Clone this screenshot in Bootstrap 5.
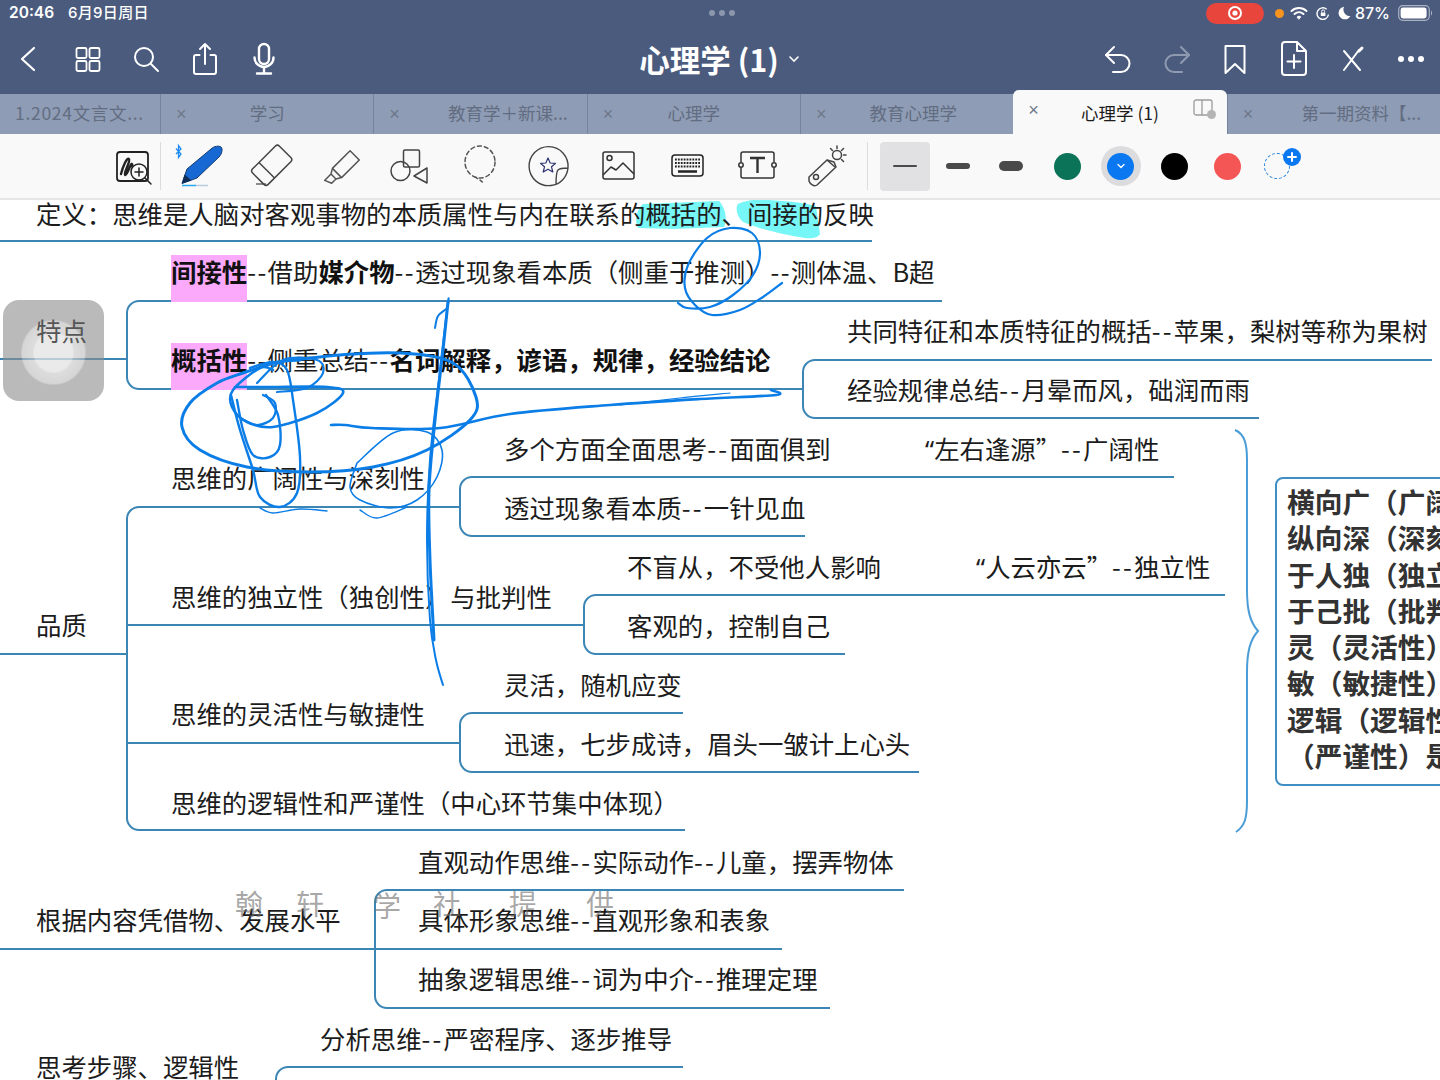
<!DOCTYPE html>
<html lang="zh-CN">
<head>
    <meta charset="UTF-8">
    <meta name="viewport" content="width=device-width, initial-scale=1.0">
    <title>心理学 (1)</title>
    <link href="https://cdn.jsdelivr.net/npm/bootstrap@5.3.0/dist/css/bootstrap.min.css" rel="stylesheet">
    <style>
        body { background: #fff; font-family: "Noto Sans CJK SC", "Noto Sans", sans-serif; overflow: hidden; }
        .app { width: 1440px; height: 1080px; overflow: hidden; }
        svg { display: block; overflow: visible; }

        /* top bars */
        .top-bars { background: #4b5b7e; color: #fff; }
        .status-bar { height: 26px; padding: 0 6px 0 9px; font-family: Inter, "Noto Sans CJK SC", sans-serif; font-size: 15.500px; font-weight: 600; }
        .status-date { margin-left: 14px; font-size: 15px; font-weight: 500; letter-spacing: .3px; }
        .status-side { flex: 1 1 0; }
        .grip-dot { width: 6px; height: 6px; border-radius: 50%; background: #8c97ad; }
        .rec-pill { width: 58px; height: 21px; border-radius: 11px; background: #e8453c; }
        .cam-dot { width: 9px; height: 9px; border-radius: 50%; background: #f7931e; margin: 0 6px 0 11px; }
        .batt-pct { margin: 0 8px 0 0; font-size: 16px; font-weight: 500; }
        .app-bar { height: 68px; padding-bottom: 2px; }
        .bar-side { flex: 1 1 0; }
        .bar-left { padding-left: 13px; gap: 29px; }
        .bar-right { padding-right: 14px; gap: 28.600px; }
        .bar-icon { width: 30px; height: 36px; }
        .doc-title { font-size: 30.500px; font-weight: 700; line-height: 36px; }
        .doc-chev { margin-left: 9px; }

        /* tabs */
        .tab-row { height: 40px; background: #8f9cb5; }
        .doc-tab { position: relative; width: 213.400px; height: 40px; padding-bottom: 2px; border-left: 1px solid #76839d; color: #626d82; font-size: 17.500px; }
        .doc-tab.first { width: 160px; border-left: 0; padding-left: 15px; letter-spacing: .7px; }
        .doc-tab .tab-x { position: absolute; left: 15px; top: 8px; font-size: 18px; font-family: "Liberation Sans", sans-serif; line-height: 24px; color: #6c7789; }
        .doc-tab .tab-name { flex: 1; text-align: center; padding-left: 14px; padding-right: 14px; white-space: nowrap; }
        .doc-tab .tab-name.nudge { padding-left: 26px; }
        .doc-tab .tab-name.long { text-align: right; padding-right: 19px; }
        .doc-tab.on { background: #f9f9f9; color: #1c1c1c; border: 0; height: 44px; margin-top: -4px; padding-top: 4px; border-radius: 6px 6px 0 0; }
        .tab-split { position: absolute; left: 180px; top: 9px; }

        /* tool bar */
        .tool-bar { height: 66px; background: #f9f9f9; border-bottom: 2px solid #e6e6e6; padding-left: 110px; }
        .tool-slot { width: 44px; height: 44px; flex: none; margin-right: 25.500px; }
        .tool-slot.zoom-slot { margin-right: 6px; }
        .tool-sep { width: 1px; height: 48px; background: #dcdcdc; flex: none; }
        .sep-a { margin-right: 18.500px; }
        .sep-b { margin-left: -7.500px; margin-right: 12px; }
        .stroke-slot { width: 50px; height: 49px; flex: none; margin-right: 3px; border-radius: 4px; }
        .stroke-slot.on { background: #e1e1e4; }
        .stroke-slot.last { margin-right: 5px; }
        .stroke-dash { width: 24px; background: #4a4a4a; border-radius: 5px; }
        .w1 { height: 2px; } .w2 { height: 6px; } .w3 { height: 10px; }
        .ink-slot { width: 53.300px; height: 49px; flex: none; }
        .ink-dot { width: 27px; height: 27px; border-radius: 50%; }
        .ink-on { width: 40px; height: 40px; border-radius: 50%; background: #dcdcde; }
        .c-green { background: #0b7358; } .c-blue { background: #0a78f0; } .c-black { background: #000; } .c-red { background: #f45656; }
        .ink-add { position: relative; width: 26px; height: 26px; border: 1.500px dashed #1b7fe0; border-radius: 50%; margin-left: 10px; }
        .ink-plus { position: absolute; left: 17.500px; top: -6.500px; width: 18px; height: 18px; border-radius: 50%; background: #0a78f0; }

        /* mind map sheet */
        .sheet { position: relative; width: 1440px; height: 880px; overflow: hidden; background: #fff; }
        .sheet-layer { position: absolute; left: 0; top: 0; }
        .mm-node { position: absolute; margin-top: -2px; white-space: nowrap; font-size: 25.400px; line-height: 26px; color: #1c1c1c; }
        .mm-node b { font-weight: 700; color: #111; }
        .mm-node.over-btn { z-index: 2; color: #565656; }
        .pink { background: linear-gradient(#fba9fb, #fba9fb) no-repeat 0 2px; padding-bottom: 13px; }
        .dd { letter-spacing: 2.200px; }
        .dd.tight { letter-spacing: 1.400px; }
        .open-q { font-family: "Noto Sans", sans-serif; }
        .stamp { position: absolute; font-size: 28px; line-height: 32px; color: rgba(110,110,110,.6); }
        .sum-box { position: absolute; left: 1275px; top: 277px; width: 220px; height: 309px; padding: 4px 0 0 10px; border: 2px solid #3f8fc4; border-radius: 8px; font-size: 27.700px; font-weight: 700; line-height: 36.250px; color: #333; white-space: nowrap; }
        .touch-btn { position: absolute; left: 3px; top: 100px; width: 101px; height: 101px; border-radius: 16px; background: radial-gradient(circle at 50% 52%, rgba(226,226,226,.74) 0, rgba(226,226,226,.74) 19px, rgba(204,204,204,.68) 21px, rgba(190,190,190,.64) 31px, rgba(140,140,140,.6) 33px); }
    </style>
</head>
<body>
<div class="app d-flex flex-column">

    <div class="top-bars">
        <!-- status bar -->
        <div class="status-bar d-flex align-items-center">
            <div class="status-side d-flex align-items-center"><span>20:46</span><span class="status-date">6月9日周日</span></div>
            <div class="d-flex gap-1"><i class="grip-dot"></i><i class="grip-dot"></i><i class="grip-dot"></i></div>
            <div class="status-side d-flex align-items-center justify-content-end">
                <div class="rec-pill d-flex align-items-center justify-content-center">
                    <svg width="16" height="16" viewBox="0 0 16 16"><circle cx="8" cy="8" r="6" fill="none" stroke="#fff" stroke-width="2"/><circle cx="8" cy="8" r="2.600" fill="#fff"/></svg>
                </div>
                <i class="cam-dot"></i>
                <svg class="me-1" width="18" height="14" viewBox="0 0 18 14" fill="none" stroke="#fff" stroke-width="2" stroke-linecap="round"><path d="M1.500 5a11 11 0 0 1 15 0M4.500 8a6.800 6.800 0 0 1 9 0"/><path d="M7.300 10.800a2.600 2.600 0 0 1 3.400 0L9 13z" fill="#fff" stroke-width="1"/></svg>
                <svg class="ms-1 me-1" width="14" height="15" viewBox="0 0 14 15" fill="none" stroke="#fff" stroke-width="1.400"><path d="M12.500 8.500a5.800 5.800 0 1 1-1.800-5.200"/><rect x="4.800" y="6.500" width="4.600" height="3.600" rx=".6" fill="#fff" stroke="none"/><path d="M5.600 6.500V5.400a1.500 1.500 0 0 1 3 0v1.100" stroke-width="1"/></svg>
                <svg class="ms-1 me-1" width="13" height="14" viewBox="0 0 13 14"><path d="M6 .8a6.300 6.300 0 1 0 6.400 9.300A6.600 6.600 0 0 1 6 .8z" fill="#fff"/></svg>
                <span class="batt-pct">87%</span>
                <svg width="36" height="18" viewBox="0 0 36 18"><rect x=".7" y="1.700" width="30.600" height="14.600" rx="4" fill="none" stroke="#aab2c2" stroke-width="1.200"/><rect x="2.600" y="3.600" width="26" height="10.800" rx="2.400" fill="#fff"/><path d="M33 6.500c1.400.5 1.400 4.500 0 5z" fill="#aab2c2"/></svg>
            </div>
        </div>

        <!-- document bar -->
        <div class="app-bar d-flex align-items-center">
            <div class="bar-side bar-left d-flex align-items-center">
                <svg class="bar-icon" viewBox="0 0 30 36" fill="none" stroke="#fff" stroke-width="2.200" stroke-linecap="round" stroke-linejoin="round"><path d="M21 7L9 18l12 11"/></svg>
                <svg class="bar-icon" viewBox="0 0 30 36" fill="none" stroke="#fff" stroke-width="1.800"><rect x="4.500" y="7" width="10" height="10" rx="1.500"/><rect x="17.500" y="7" width="10" height="10" rx="1.500"/><rect x="4.500" y="20" width="10" height="10" rx="1.500"/><rect x="17.500" y="20" width="10" height="10" rx="1.500"/></svg>
                <svg class="bar-icon" viewBox="0 0 30 36" fill="none" stroke="#fff" stroke-width="2" stroke-linecap="round"><circle cx="13" cy="16" r="9"/><path d="M20 23l7 7"/></svg>
                <svg class="bar-icon" viewBox="0 0 30 36" fill="none" stroke="#fff" stroke-width="2" stroke-linecap="round" stroke-linejoin="round"><path d="M9.500 14H6a2 2 0 0 0-2 2v15a2 2 0 0 0 2 2h18a2 2 0 0 0 2-2V16a2 2 0 0 0-2-2h-3.500M15 23V3M10 8l5-5 5 5"/></svg>
                <svg class="bar-icon" viewBox="0 0 30 36" fill="none" stroke="#fff" stroke-width="2.400" stroke-linecap="round"><rect x="10" y="3" width="10" height="20" rx="5"/><path d="M5.500 16.500a9.500 9.500 0 0 0 19 0M15 26v6M8 32.500h14"/></svg>
            </div>
            <div class="d-flex align-items-center">
                <span class="doc-title">心理学 (1)</span>
                <svg class="doc-chev" width="12" height="8" viewBox="0 0 12 8" fill="none" stroke="#fff" stroke-width="1.600" stroke-linecap="round"><path d="M2 2l4 4 4-4"/></svg>
            </div>
            <div class="bar-side bar-right d-flex align-items-center justify-content-end">
                <svg class="bar-icon" viewBox="0 0 30 36" fill="none" stroke="#fff" stroke-width="2" stroke-linecap="round" stroke-linejoin="round"><path d="M11 6L3 14l8 8"/><path d="M3 14h15a8.500 8.500 0 0 1 0 17h-8"/></svg>
                <svg class="bar-icon" viewBox="0 0 30 36" fill="none" stroke="#8f9ab0" stroke-width="2" stroke-linecap="round" stroke-linejoin="round"><path d="M19 6l8 8-8 8"/><path d="M27 14H12a8.500 8.500 0 0 0 0 17h8"/></svg>
                <svg class="bar-icon" viewBox="0 0 30 36" fill="none" stroke="#fff" stroke-width="2" stroke-linejoin="round"><path d="M5.500 5h19v27L15 23l-9.500 9z"/></svg>
                <svg class="bar-icon" viewBox="0 0 30 36" fill="none" stroke="#fff" stroke-width="2" stroke-linecap="round" stroke-linejoin="round"><path d="M18 1H6a3 3 0 0 0-3 3v27a3 3 0 0 0 3 3h18a3 3 0 0 0 3-3V10zM18 1v9h9M15 14v13M8.500 20.500h13"/></svg>
                <svg class="bar-icon" viewBox="0 0 30 36" fill="none" stroke="#fff" stroke-width="2" stroke-linecap="round"><path d="M7 10l16 19M22 9L7 29"/><path d="M22 10l3-3" stroke-width="3"/></svg>
                <svg class="bar-icon" viewBox="0 0 30 36" fill="#fff"><circle cx="5" cy="18" r="3"/><circle cx="15" cy="18" r="3"/><circle cx="25" cy="18" r="3"/></svg>
            </div>
        </div>

        <!-- tabs -->
        <div class="tab-row d-flex">
            <div class="doc-tab first d-flex align-items-center"><span>1.2024文言文...</span></div>
            <div class="doc-tab d-flex align-items-center"><span class="tab-x">×</span><span class="tab-name">学习</span></div>
            <div class="doc-tab d-flex align-items-center"><span class="tab-x">×</span><span class="tab-name long">教育学＋新课...</span></div>
            <div class="doc-tab d-flex align-items-center"><span class="tab-x">×</span><span class="tab-name">心理学</span></div>
            <div class="doc-tab d-flex align-items-center"><span class="tab-x">×</span><span class="tab-name nudge">教育心理学</span></div>
            <div class="doc-tab on d-flex align-items-center"><span class="tab-x">×</span><span class="tab-name">心理学 (1)</span>
                <svg class="tab-split" width="24" height="22" viewBox="0 0 24 22" fill="none" stroke="#9c9c9c" stroke-width="1.300"><rect x="1" y="1" width="18" height="15" rx="2"/><path d="M9 1v15"/><circle cx="18.500" cy="15.500" r="4.500" fill="#b4b4b4" stroke="none"/></svg>
            </div>
            <div class="doc-tab d-flex align-items-center"><span class="tab-x">×</span><span class="tab-name long">第一期资料【...</span></div>
        </div>
    </div>

    <!-- drawing tools -->
    <div class="tool-bar d-flex align-items-center">
        <svg class="tool-slot zoom-slot" viewBox="0 0 44 44" fill="none" stroke="#222" stroke-width="1.500" stroke-linecap="round">
            <rect x="7" y="8" width="31" height="29" rx="3" stroke-width="1.800"/>
            <path d="M11 30c2-8 6-17 8-15s-6 15-4 16 6-13 7-11 0 9 3 5" stroke-width="2.400"/>
            <circle cx="29" cy="28" r="8" fill="#f9f9f9"/><path d="M29 24v8M25 28h8M35 34l6 6"/>
        </svg>
        <div class="tool-sep sep-a"></div>
        <svg class="tool-slot" viewBox="0 0 44 44">
            <path d="M-4 4.500L1 10l-2.500 3.500v-12L1 5l-5 5" fill="none" stroke="#1f8bf0" stroke-width="1.300"/>
            <path d="M2 39.500L7 25 31 5c3-3 8-3.500 10-2s1 7-2 10L17 34z" fill="#1768d2" stroke="#123a70" stroke-width="1"/>
            <path d="M2 39.500l2.500-9 7 6z" fill="#0f2d57"/>
            <path d="M2 41.500h14" stroke="#2aa7ef" stroke-width="1.500"/><path d="M16 41.500h12" stroke="#bbccdd" stroke-width="1.500"/>
        </svg>
        <svg class="tool-slot" viewBox="0 0 44 44" fill="none" stroke="#444" stroke-width="1.500" stroke-linejoin="round">
            <g transform="rotate(45 22 22)"><rect x="11" y="2" width="22" height="38" rx="3"/><path d="M11 28h22"/></g><path d="M7 40h10" stroke-width="1.200"/>
        </svg>
        <svg class="tool-slot" viewBox="0 0 44 44" fill="none" stroke="#555" stroke-width="1.500" stroke-linejoin="round">
            <g transform="translate(-4 7) rotate(45 22 22)"><path d="M15.500-3h13v25l-3 5h-7l-3-5zM15.500 22h13M18.500 27v9l7-3v-6"/></g>
        </svg>
        <svg class="tool-slot" viewBox="0 0 44 44" fill="none" stroke="#444" stroke-width="1.500" stroke-linejoin="round">
            <rect x="15.500" y="6" width="16" height="17" rx="1.500"/><circle cx="12.500" cy="27" r="9.500"/><path d="M39 24l-13 8 13 7z"/>
        </svg>
        <svg class="tool-slot" viewBox="0 0 44 44" fill="none" stroke="#555" stroke-width="1.500" stroke-linecap="round">
            <ellipse cx="22" cy="18" rx="15" ry="16" stroke-dasharray="4 3"/><path d="M17 33c3 2 6 3 9 7" stroke-dasharray="3 3"/>
        </svg>
        <svg class="tool-slot" viewBox="0 0 44 44" fill="none" stroke="#444" stroke-width="1.400" stroke-linejoin="round">
            <path d="M41 24A19.500 19.500 0 1 0 24 41.500c9-1 16-8 17-17.500zM41 24c-3 0-8 0-10 2s-2 7-2 15"/>
            <path d="M21 14l2.200 5 5.300.4-4 3.400 1.300 5.200-4.800-2.800-4.800 2.800 1.300-5.200-4-3.400 5.300-.4z" stroke="#2b3270" stroke-width="1.200"/>
        </svg>
        <svg class="tool-slot" viewBox="0 0 44 44" fill="none" stroke="#333" stroke-width="1.500" stroke-linejoin="round">
            <rect x="6" y="8" width="31" height="27" rx="2"/><circle cx="12.500" cy="14" r="2.500"/><path d="M6 31l8-8 5 3 7-7 11 11"/>
        </svg>
        <svg class="tool-slot" viewBox="0 0 44 44" fill="none" stroke="#222">
            <rect x="6" y="11" width="31" height="21" rx="3" stroke-width="1.500"/>
            <path d="M9 15.500h25M9 19h25M9 22.500h25" stroke-width="2" stroke-dasharray="1.800 1.100"/><path d="M12 27.500h19" stroke-width="2.500"/>
        </svg>
        <svg class="tool-slot" viewBox="0 0 44 44" fill="none" stroke="#333" stroke-width="1.500">
            <path d="M5 18V10a2 2 0 0 1 2-2h29a2 2 0 0 1 2 2v8M5 24v8a2 2 0 0 0 2 2h29a2 2 0 0 0 2-2v-8"/>
            <circle cx="5" cy="21" r="2.200"/><circle cx="38" cy="21" r="2.200"/>
            <path d="M14 14h15M21.500 14v15" stroke-width="2.400"/>
        </svg>
        <svg class="tool-slot" viewBox="0 0 44 44" fill="none" stroke="#444" stroke-width="1.500" stroke-linejoin="round">
            <path d="M4 33L22 16l7 2 2 5-19 18c-3 2-7-1-8-4z"/><circle cx="11" cy="33" r="2.500"/><path d="M22 16l8 7"/>
            <circle cx="32" cy="11" r="4.500"/><path d="M32 2v2.500M41 11h-2.500M38.500 4.500l-2 2M25.500 4.500l2 2M38.500 17.500l-2-2" stroke-linecap="round"/>
        </svg>
        <div class="tool-sep sep-b"></div>
        <div class="stroke-slot on d-flex align-items-center justify-content-center"><div class="stroke-dash w1"></div></div>
        <div class="stroke-slot d-flex align-items-center justify-content-center"><div class="stroke-dash w2"></div></div>
        <div class="stroke-slot last d-flex align-items-center justify-content-center"><div class="stroke-dash w3"></div></div>
        <div class="ink-slot d-flex align-items-center justify-content-center"><div class="ink-dot c-green"></div></div>
        <div class="ink-slot d-flex align-items-center justify-content-center"><div class="ink-on d-flex align-items-center justify-content-center"><div class="ink-dot c-blue d-flex align-items-center justify-content-center">
            <svg width="8" height="6" viewBox="0 0 8 6" fill="none" stroke="#fff" stroke-width="1.300" stroke-linecap="round"><path d="M1 1.500l3 3 3-3"/></svg>
        </div></div></div>
        <div class="ink-slot d-flex align-items-center justify-content-center"><div class="ink-dot c-black"></div></div>
        <div class="ink-slot d-flex align-items-center justify-content-center"><div class="ink-dot c-red"></div></div>
        <div class="ink-add"><div class="ink-plus d-flex align-items-center justify-content-center">
            <svg width="10" height="10" viewBox="0 0 10 10" stroke="#fff" stroke-width="2" stroke-linecap="round"><path d="M5 1v8M1 5h8"/></svg>
        </div></div>
    </div>

    <!-- mind map page -->
    <div class="sheet">
        <svg class="sheet-layer" width="1440" height="880" viewBox="0 200 1440 880" fill="none" stroke="#3c86b6" stroke-width="2">
            <!-- marker highlight -->
            <path d="M638 228c-4-8-1-19 5-24l76-3c6 6 9 18 5 26l-50 2zM738 204c8-4 20-5 30-4 20 1 38 3 48 6l4 28c-2 4-9 5-15 4-22-3-48-10-62-16-6-5-8-13-5-18z" fill="#76f6f6" stroke="none"/>
            <path d="M0 241H872"/>
            <path d="M942 301H139a12 12 0 0 0-12 12V377a12 12 0 0 0 12 12H803"/>
            <path d="M0 359H127"/>
            <path d="M1432 360H815a12 12 0 0 0-12 12V406a12 12 0 0 0 12 12H1259"/>
            <path d="M460 507H139a12 12 0 0 0-12 12V818a12 12 0 0 0 12 12H685"/>
            <path d="M1174 477H472a12 12 0 0 0-12 12V524a12 12 0 0 0 12 12H805"/>
            <path d="M127 625H584"/>
            <path d="M1225 595H596a12 12 0 0 0-12 12V642a12 12 0 0 0 12 12H845"/>
            <path d="M0 654H127"/>
            <path d="M127 743H460"/>
            <path d="M683 713H472a12 12 0 0 0-12 12V760a12 12 0 0 0 12 12H919"/>
            <path d="M904 890H387a12 12 0 0 0-12 12V996a12 12 0 0 0 12 12H830"/>
            <path d="M0 949H782"/>
            <path d="M683 1067H288a12 12 0 0 0-12 12V1092"/>
            <path d="M1235 430C1245 434 1247 445 1247 460V590C1247 610 1250 622 1258 631C1250 640 1247 652 1247 672V800C1247 818 1245 826 1236 832" stroke="#4a9dd6"/>
        </svg>

        <div class="mm-node" data-x="36" data-y="215">定义：思维是人脑对客观事物的本质属性与内在联系的概括的、间接的反映</div>
        <div class="mm-node" data-x="171" data-y="273"><b class="pink">间接性</b><span class="dd tight">--</span>借助<b>媒介物</b><span class="dd tight">--</span>透过现象看本质（侧重于推测）<span class="dd tight">--</span>测体温、B超</div>
        <div class="mm-node over-btn" data-x="36" data-y="332">特点</div>
        <div class="mm-node" data-x="847" data-y="332">共同特征和本质特征的概括<span class="dd">--</span>苹果，梨树等称为果树</div>
        <div class="mm-node" data-x="171" data-y="361"><b class="pink">概括性</b><span class="dd tight">--</span>侧重总结<span class="dd tight">--</span><b>名词解释，谚语，规律，经验结论</b></div>
        <div class="mm-node" data-x="847" data-y="391">经验规律总结<span class="dd">--</span>月晕而风，础润而雨</div>
        <div class="mm-node" data-x="504" data-y="450">多个方面全面思考<span class="dd">--</span>面面俱到</div>
        <div class="mm-node" data-x="925" data-y="450"><span class="open-q">“</span>左右逢源”<span class="dd">--</span>广阔性</div>
        <div class="mm-node" data-x="171" data-y="479">思维的广阔性与深刻性</div>
        <div class="mm-node" data-x="504" data-y="509">透过现象看本质<span class="dd">--</span>一针见血</div>
        <div class="mm-node" data-x="627" data-y="568">不盲从，不受他人影响</div>
        <div class="mm-node" data-x="976" data-y="568"><span class="open-q">“</span>人云亦云”<span class="dd">--</span>独立性</div>
        <div class="mm-node" data-x="171" data-y="598">思维的独立性（独创性）与批判性</div>
        <div class="mm-node" data-x="36" data-y="626">品质</div>
        <div class="mm-node" data-x="627" data-y="627">客观的，控制自己</div>
        <div class="mm-node" data-x="504" data-y="686">灵活，随机应变</div>
        <div class="mm-node" data-x="171" data-y="715">思维的灵活性与敏捷性</div>
        <div class="mm-node" data-x="504" data-y="745">迅速，七步成诗，眉头一皱计上心头</div>
        <div class="mm-node" data-x="171" data-y="804">思维的逻辑性和严谨性（中心环节集中体现）</div>
        <div class="mm-node" data-x="418" data-y="863">直观动作思维<span class="dd">--</span>实际动作<span class="dd">--</span>儿童，摆弄物体</div>
        <div class="mm-node" data-x="36" data-y="921">根据内容凭借物、发展水平</div>
        <div class="mm-node" data-x="418" data-y="921">具体形象思维<span class="dd">--</span>直观形象和表象</div>
        <div class="mm-node" data-x="418" data-y="980">抽象逻辑思维<span class="dd">--</span>词为中介<span class="dd">--</span>推理定理</div>
        <div class="mm-node" data-x="320" data-y="1040">分析思维<span class="dd">--</span>严密程序、逐步推导</div>
        <div class="mm-node" data-x="36" data-y="1068">思考步骤、逻辑性</div>

        <div class="stamp" data-x="235" data-y="903">翰</div>
        <div class="stamp" data-x="296" data-y="903">轩</div>
        <div class="stamp" data-x="373" data-y="905">学</div>
        <div class="stamp" data-x="433" data-y="903">社</div>
        <div class="stamp" data-x="509" data-y="903">提</div>
        <div class="stamp" data-x="586" data-y="903">供</div>

        <div class="sum-box">
            <div>横向广（广阔性）</div>
            <div>纵向深（深刻性）</div>
            <div>于人独（独立性）</div>
            <div>于己批（批判性）</div>
            <div>灵（灵活性）</div>
            <div>敏（敏捷性）</div>
            <div>逻辑（逻辑性）</div>
            <div>（严谨性）是</div>
        </div>

        <svg id="ink-layer" class="sheet-layer" width="1440" height="880" viewBox="0 200 1440 880" fill="none" stroke="#0b7de6" stroke-linecap="round" stroke-linejoin="round"></svg>
        <div class="touch-btn"></div>
    </div>
</div>

<script src="https://cdn.jsdelivr.net/npm/bootstrap@5.3.0/dist/js/bootstrap.bundle.min.js"></script>
<script>
    // place map nodes: data-x is left edge, data-y is text centre in page coordinates
    document.querySelectorAll(".mm-node, .stamp").forEach(function (el) {
        el.style.left = el.dataset.x + "px";
        el.style.top = (el.dataset.y - 200 - el.offsetHeight / 2) + "px";
    });

    // pen strokes, page coordinates: [width, x,y, x,y, ...]
    const strokes = [
        [3, 278,362, 340,355, 400,353, 453,363, 476,397, 470,420, 427,450, 373,467, 310,472, 247,467, 200,450, 182,427, 190,403, 217,383, 243,373, 278,362, 300,360],
        [2.4, 231,395, 240,430, 253,470, 260,497, 280,507, 297,493, 300,457, 293,400, 287,370, 273,362, 250,368],
        [2.4, 237,400, 243,430, 253,455, 270,457, 280,445, 278,415, 266,395],
        [2.6, 235,387, 270,387, 327,387, 343,393, 317,413, 273,427, 247,422, 232,407, 233,390, 260,368, 273,370],
        [2.2, 263,395, 275,403, 273,418, 257,425, 240,418],
        [2.2, 257,383, 283,360, 317,360, 323,373, 307,388, 277,392],
        [1.4, 260,508, 273,513, 300,509, 327,511],
        [1.6, 357,463, 393,433, 427,432, 442,450, 437,477, 417,500, 390,508, 360,500, 350,487, 357,463],
        [1.4, 360,510, 377,518, 407,507],
        [2.6, 331,425, 345,425, 372,428, 440,428, 510,414, 610,405, 700,399, 776,395, 771,390],
        [1.2, 620,405, 680,398, 730,393],
        [3, 448,302, 443,350, 435,420, 429,490, 430,560, 434,640],
        [2, 435,328, 438,316, 447,308, 448,302, 440,370, 430,460, 427,540, 430,620, 436,660, 443,685],
        [2.2, 678,303, 687,308, 710,307, 733,295, 753,275, 760,252, 752,233, 730,228, 707,238, 688,265, 685,288, 695,305, 712,315, 740,310, 763,297, 782,283]
    ];

    // catmull-rom through the points so the strokes look hand drawn
    const inkLayer = document.getElementById("ink-layer");
    strokes.forEach(function (s) {
        const p = [];
        for (let i = 1; i < s.length; i += 2) p.push([s[i], s[i + 1]]);
        let d = "M" + p[0][0] + " " + p[0][1];
        for (let i = 0; i < p.length - 1; i++) {
            const a = p[Math.max(i - 1, 0)], b = p[i], c = p[i + 1], e = p[Math.min(i + 2, p.length - 1)];
            d += "C" + (b[0] + (c[0] - a[0]) / 6) + " " + (b[1] + (c[1] - a[1]) / 6) + " "
                + (c[0] - (e[0] - b[0]) / 6) + " " + (c[1] - (e[1] - b[1]) / 6) + " " + c[0] + " " + c[1];
        }
        const path = document.createElementNS("http://www.w3.org/2000/svg", "path");
        path.setAttribute("d", d);
        path.setAttribute("stroke-width", s[0]);
        inkLayer.appendChild(path);
    });
</script>
</body>
</html>
